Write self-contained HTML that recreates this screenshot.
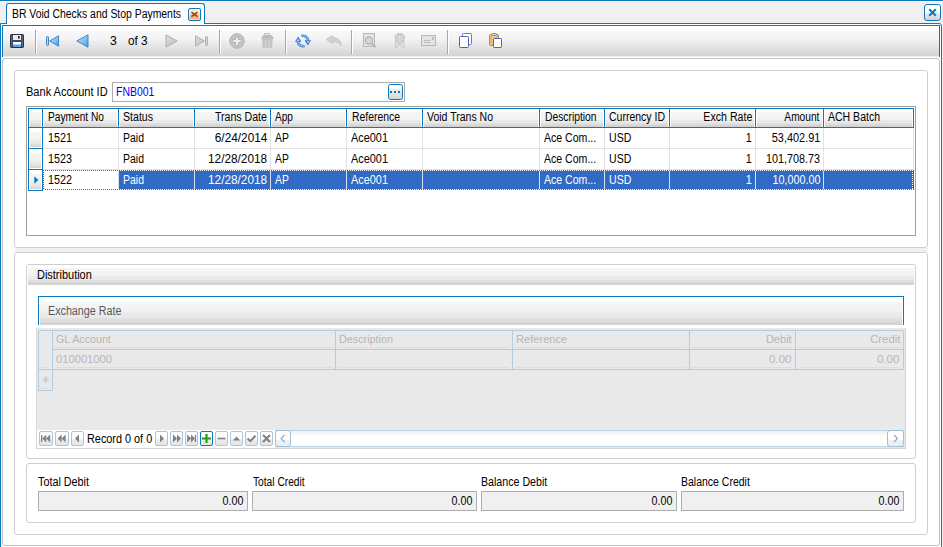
<!DOCTYPE html>
<html lang="en"><head><meta charset="utf-8"><title>BR Void Checks and Stop Payments</title>
<style>
html,body{margin:0;padding:0;}
body{background:#f0f0f0;width:943px;height:547px;overflow:hidden;font-family:"Liberation Sans", sans-serif;font-size:12px;}
#app{position:relative;width:943px;height:547px;overflow:hidden;}
#app div,#app svg,#app span{position:absolute;box-sizing:border-box;}
.t{white-space:pre;line-height:16px;height:16px;transform-origin:0 0;}

</style></head>
<body>
<div id="app">
<div style="left:0px;top:0px;width:943px;height:1px;background:#0b78c0;"></div>
<div style="left:0px;top:1px;width:943px;height:1px;background:#fff;"></div>
<div style="left:0px;top:23px;width:942px;height:530px;border:1px solid #0b78c0;background:#fff;border-radius:0 3px 0 0;"></div>
<div style="left:2px;top:25px;width:938px;height:32px;border:1px solid #0b78c0;border-bottom:none;background:linear-gradient(#fff 0,#fff 4.5px,#f7f7f7 5.5px,#f3f3f3 14px,#ededed 15px,#ebebeb 18px,#e6e6e6 19px,#e3e3e3 23px,#dddddd 24px,#dadada 27px,#d5d5d5 28px,#d5d5d5 30px,#ececec 30px,#ececec 31px);"></div>
<div style="left:6px;top:3px;width:199px;height:21px;border:1px solid #0b78c0;border-bottom:none;border-radius:3px 3px 0 0;background:#fff;"></div>
<div style="left:188px;top:8px;width:13px;height:13px;border:1px solid #0b78c0;border-radius:2px;background:linear-gradient(#fef1e6 0,#fddcc2 45%,#fabb8c 55%,#f9ac76 100%);box-shadow:inset 0 0 0 1px rgba(255,255,255,0.45);"><svg width="11" height="11" viewBox="0 0 11 11" style="left:0;top:0"><path d="M2.5 3.1L8.5 7.7M8.5 3.1L2.5 7.7" stroke="#9a4300" stroke-width="1.55"/></svg></div>
<div style="left:924px;top:4px;width:17px;height:17px;border:1px solid #0b78c0;border-radius:3px;background:linear-gradient(#fff 0,#fff 45%,#e9e9e9 60%,#d2d2d2 100%);"><svg width="15" height="15" viewBox="0 0 15 15" style="left:0;top:0"><path d="M4.2 4.2L10.8 10.8M10.8 4.2L4.2 10.8" stroke="#0b78c0" stroke-width="2"/></svg></div>
<div style="left:35px;top:30px;width:1px;height:24px;background:#a8a8a8;"></div>
<div style="left:36px;top:30px;width:1px;height:24px;background:#fff;"></div>
<div style="left:219px;top:30px;width:1px;height:24px;background:#a8a8a8;"></div>
<div style="left:220px;top:30px;width:1px;height:24px;background:#fff;"></div>
<div style="left:285px;top:30px;width:1px;height:24px;background:#a8a8a8;"></div>
<div style="left:286px;top:30px;width:1px;height:24px;background:#fff;"></div>
<div style="left:351px;top:30px;width:1px;height:24px;background:#a8a8a8;"></div>
<div style="left:352px;top:30px;width:1px;height:24px;background:#fff;"></div>
<div style="left:447px;top:30px;width:1px;height:24px;background:#a8a8a8;"></div>
<div style="left:448px;top:30px;width:1px;height:24px;background:#fff;"></div>
<svg style="left:10px;top:34px" width="14" height="14" viewBox="0 0 14 14"><rect x="0.5" y="0.5" width="13" height="13" rx="0.8" fill="#3d4862" stroke="#2b3144"/><path d="M1.5 1.5V12.5M12.5 1.5V12.5" stroke="#6a7388" stroke-width="0.8"/><rect x="3" y="1" width="8" height="5" fill="#e9edf1"/><rect x="8" y="2" width="1.6" height="2.6" fill="#1c1c24"/><rect x="3" y="8" width="8" height="5" fill="#fff"/><rect x="3" y="10.6" width="8" height="2.4" fill="#5b9bd8"/><rect x="3" y="10.6" width="8" height="0.8" fill="#8fc0ec"/></svg>
<svg style="left:46px;top:35px" width="13" height="12" viewBox="0 0 13 12"><defs><linearGradient id="gb" x1="0" y1="0" x2="1" y2="1"><stop offset="0" stop-color="#c4e4fa"/><stop offset="0.5" stop-color="#8cc4f2"/><stop offset="1" stop-color="#4d98e0"/></linearGradient></defs><rect x="0.5" y="1.5" width="2" height="9" rx="0.8" fill="#b4daf8" stroke="#3d86cc"/><path d="M12.5 0.8V11.2L3.6 6Z" fill="url(#gb)" stroke="#3d86cc"/></svg>
<svg style="left:76px;top:34px" width="13" height="14" viewBox="0 0 13 14"><path d="M12 0.8V13.2L0.8 7Z" fill="url(#gb)" stroke="#3d86cc"/></svg>
<svg style="left:165px;top:34px" width="13" height="14" viewBox="0 0 13 14"><defs><linearGradient id="gg" x1="0" y1="0" x2="1" y2="1"><stop offset="0" stop-color="#dedede"/><stop offset="1" stop-color="#bebebe"/></linearGradient></defs><path d="M1 0.8V13.2L12.2 7Z" fill="url(#gg)" stroke="#b0b0b0"/></svg>
<svg style="left:195px;top:35px" width="14" height="12" viewBox="0 0 14 12"><path d="M0.5 0.8V11.2L9.4 6Z" fill="url(#gg)" stroke="#b0b0b0"/><rect x="10.5" y="1.5" width="2" height="9" rx="0.8" fill="#d6d6d6" stroke="#b0b0b0"/></svg>
<svg style="left:229px;top:33px" width="16" height="16" viewBox="0 0 16 16"><circle cx="8" cy="8" r="7.3" fill="#c4c4c4" stroke="#b4b4b4"/><path d="M8 3.6V12.4M3.6 8H12.4" stroke="#b0b0b0" stroke-width="3.6"/><path d="M8 4.3V11.7M4.3 8H11.7" stroke="#ededed" stroke-width="2.2"/></svg>
<svg style="left:261px;top:33px" width="13" height="15" viewBox="0 0 13 15"><rect x="3.5" y="0.5" width="5" height="2" rx="0.6" fill="none" stroke="#b4b4b4"/><path d="M0.4 5.6L2 2.4H10.6L12.4 5.6Z" fill="#bdbdbd" stroke="#b6b6b6" stroke-width="0.6"/><path d="M1.5 6H11.3L10.9 14.6H1.9Z" fill="#c6c6c6" stroke="#bcbcbc" stroke-width="0.6"/><path d="M4.6 7V14M8.2 7V14" stroke="#d6d6d6" stroke-width="1.1"/></svg>
<svg style="left:295px;top:34px" width="16" height="14" viewBox="0 0 16 14"><g fill="none" stroke-linecap="butt"><path d="M6.4 2A5.3 5.3 0 0 1 13.2 6.2" stroke="#3274cc" stroke-width="2.6"/><path d="M9.6 12A5.3 5.3 0 0 1 2.8 7.8" stroke="#3274cc" stroke-width="2.6"/><path d="M6.6 2A5.3 5.3 0 0 1 13.2 6.2" stroke="#9ad2f6" stroke-width="1.1"/><path d="M9.4 12A5.3 5.3 0 0 1 2.8 7.8" stroke="#9ad2f6" stroke-width="1.1"/></g><path d="M9.6 6.2H16L12.8 11.6Z" fill="#3274cc"/><path d="M11.5 7.1H14.3L12.9 9.6Z" fill="#a8def8"/><path d="M0 7.8H6.4L3.2 2.4Z" fill="#3274cc"/><path d="M1.7 6.9H4.5L3.1 4.4Z" fill="#a8def8"/></svg>
<svg style="left:326px;top:35px" width="16" height="11" viewBox="0 0 16 11"><path d="M0.4 4.4L6.4 0.5V2.6C11 2.6 15 5 15.3 10.6C13.6 8 10.5 6.6 6.4 6.8V8.6Z" fill="#d0d0d0" stroke="#c2c2c2" stroke-width="0.8"/></svg>
<svg style="left:363px;top:33px" width="14" height="15" viewBox="0 0 14 15"><rect x="0.5" y="0.5" width="11" height="13" fill="#e6e6e6" stroke="#b6b6b6"/><circle cx="6" cy="7.5" r="3.6" fill="#d6d6d6" stroke="#b0b0b0" stroke-width="1.2"/><path d="M8.8 10.5L12.6 14.3" stroke="#b4b4b4" stroke-width="2"/></svg>
<svg style="left:394px;top:33px" width="12" height="16" viewBox="0 0 12 16"><path d="M1.6 7L1.2 15.2L5.7 12L10.2 15.2L9.8 7Z" fill="#e0e0e0" stroke="#c0c0c0" stroke-width="0.8"/><path d="M5.7 0.4C8.6 0.4 10.4 2.3 10.4 4.6C10.4 7 7.6 9 5.7 11.2C3.8 9 1 7 1 4.6C1 2.3 2.8 0.4 5.7 0.4Z" fill="#d6d6d6" stroke="#bababa" stroke-width="0.9"/><circle cx="5.7" cy="4.4" r="1.5" fill="#f6f6f6" stroke="#b8b8b8" stroke-width="0.7"/></svg>
<svg style="left:421px;top:35px" width="15" height="11" viewBox="0 0 15 11"><rect x="0.5" y="0.5" width="14" height="10" fill="#e4e4e4" stroke="#b8b8b8"/><rect x="11" y="2" width="2" height="3" fill="#c0c0c0"/><path d="M3 5.5h6.4M3 7.5h6.4" stroke="#bcbcbc"/></svg>
<svg style="left:459px;top:33px" width="13" height="15" viewBox="0 0 13 15"><rect x="3.5" y="0.5" width="9" height="11" rx="0.8" fill="#fff" stroke="#6878c4"/><rect x="0.5" y="3.5" width="9" height="11" rx="0.8" fill="#fff" stroke="#5264ba"/></svg>
<svg style="left:489px;top:33px" width="14" height="15" viewBox="0 0 14 15"><defs><linearGradient id="go" x1="0" y1="0" x2="1" y2="0"><stop offset="0" stop-color="#e9a646"/><stop offset="0.45" stop-color="#f6d292"/><stop offset="1" stop-color="#e9a646"/></linearGradient></defs><rect x="0.5" y="1.5" width="9" height="11" rx="1" fill="url(#go)" stroke="#cc8c34"/><rect x="2.5" y="0.5" width="5" height="2" rx="1" fill="#cdd8ee" stroke="#6c84c0"/><rect x="4.5" y="5.5" width="8" height="9" rx="0.6" fill="#fff" stroke="#5264ba"/></svg>
<div style="left:2px;top:58px;width:938px;height:488px;border:1px solid #c4c4c4;border-radius:3px;background:#fff;"></div>
<div style="left:14px;top:70px;width:914px;height:178px;border:1px solid #cfcfcf;border-radius:3px;background:#fff;"></div>
<div style="left:15px;top:248px;width:913px;height:4px;background:#f0f0f0;"></div>
<div style="left:14px;top:252px;width:914px;height:283px;border:1px solid #cfcfcf;border-radius:3px;background:#fff;"></div>
<div style="left:112px;top:82px;width:293px;height:20px;border:1px solid #ababab;background:#fff;"></div>
<div style="left:388px;top:84px;width:15px;height:16px;border:1px solid #0b78c0;border-radius:2.5px;background:linear-gradient(#fff 0,#fff 22%,#ededed 32%,#d6d6d6 100%);"></div>
<div style="left:390px;top:91px;width:2px;height:2px;background:#0b78c0;"></div>
<div style="left:394px;top:91px;width:2px;height:2px;background:#0b78c0;"></div>
<div style="left:398px;top:91px;width:2px;height:2px;background:#0b78c0;"></div>
<div style="left:26px;top:106px;width:890px;height:130px;border:1px solid #a0a0a0;background:#fff;"></div>
<div style="left:28px;top:108px;width:886px;height:20px;background:linear-gradient(#fff 0,#fff 17%,#f5f5f5 19%,#f2f2f2 60%,#eaeaea 63%,#e8e8e8 77%,#dfdfdf 80%,#dddddd 88%,#d4d4d4 91%,#d1d1d1 100%);border-top:1px solid #0b78c0;border-bottom:1px solid #0b78c0;"></div>
<div style="left:28px;top:108px;width:1px;height:20px;background:#0b78c0;"></div>
<div style="left:29px;top:109px;width:1px;height:18px;background:#fff;"></div>
<div style="left:42px;top:108px;width:1px;height:20px;background:#0b78c0;"></div>
<div style="left:43px;top:109px;width:1px;height:18px;background:#fff;"></div>
<div style="left:41px;top:109px;width:1px;height:18px;background:#fff;"></div>
<div style="left:118px;top:108px;width:1px;height:20px;background:#0b78c0;"></div>
<div style="left:119px;top:109px;width:1px;height:18px;background:#fff;"></div>
<div style="left:117px;top:109px;width:1px;height:18px;background:#fff;"></div>
<div style="left:194px;top:108px;width:1px;height:20px;background:#0b78c0;"></div>
<div style="left:195px;top:109px;width:1px;height:18px;background:#fff;"></div>
<div style="left:193px;top:109px;width:1px;height:18px;background:#fff;"></div>
<div style="left:270px;top:108px;width:1px;height:20px;background:#0b78c0;"></div>
<div style="left:271px;top:109px;width:1px;height:18px;background:#fff;"></div>
<div style="left:269px;top:109px;width:1px;height:18px;background:#fff;"></div>
<div style="left:346px;top:108px;width:1px;height:20px;background:#0b78c0;"></div>
<div style="left:347px;top:109px;width:1px;height:18px;background:#fff;"></div>
<div style="left:345px;top:109px;width:1px;height:18px;background:#fff;"></div>
<div style="left:422px;top:108px;width:1px;height:20px;background:#0b78c0;"></div>
<div style="left:423px;top:109px;width:1px;height:18px;background:#fff;"></div>
<div style="left:421px;top:109px;width:1px;height:18px;background:#fff;"></div>
<div style="left:539px;top:108px;width:1px;height:20px;background:#0b78c0;"></div>
<div style="left:540px;top:109px;width:1px;height:18px;background:#fff;"></div>
<div style="left:538px;top:109px;width:1px;height:18px;background:#fff;"></div>
<div style="left:604px;top:108px;width:1px;height:20px;background:#0b78c0;"></div>
<div style="left:605px;top:109px;width:1px;height:18px;background:#fff;"></div>
<div style="left:603px;top:109px;width:1px;height:18px;background:#fff;"></div>
<div style="left:669px;top:108px;width:1px;height:20px;background:#0b78c0;"></div>
<div style="left:670px;top:109px;width:1px;height:18px;background:#fff;"></div>
<div style="left:668px;top:109px;width:1px;height:18px;background:#fff;"></div>
<div style="left:755px;top:108px;width:1px;height:20px;background:#0b78c0;"></div>
<div style="left:756px;top:109px;width:1px;height:18px;background:#fff;"></div>
<div style="left:754px;top:109px;width:1px;height:18px;background:#fff;"></div>
<div style="left:823px;top:108px;width:1px;height:20px;background:#0b78c0;"></div>
<div style="left:824px;top:109px;width:1px;height:18px;background:#fff;"></div>
<div style="left:822px;top:109px;width:1px;height:18px;background:#fff;"></div>
<div style="left:913px;top:108px;width:1px;height:20px;background:#0b78c0;"></div>
<div style="left:912px;top:109px;width:1px;height:18px;background:#fff;"></div>
<div style="left:28px;top:127px;width:15px;height:22px;border:1px solid #0b78c0;background:linear-gradient(#fff 0,#fff 17%,#f5f5f5 19%,#f2f2f2 60%,#eaeaea 63%,#e8e8e8 77%,#dfdfdf 80%,#dddddd 88%,#d4d4d4 91%,#d1d1d1 100%);box-shadow:inset 0 0 0 1px #fff;"></div>
<div style="left:43px;top:148px;width:871px;height:1px;background:#e2e2e2;"></div>
<div style="left:118px;top:128px;width:1px;height:21px;background:#e2e2e2;"></div>
<div style="left:194px;top:128px;width:1px;height:21px;background:#e2e2e2;"></div>
<div style="left:270px;top:128px;width:1px;height:21px;background:#e2e2e2;"></div>
<div style="left:346px;top:128px;width:1px;height:21px;background:#e2e2e2;"></div>
<div style="left:422px;top:128px;width:1px;height:21px;background:#e2e2e2;"></div>
<div style="left:539px;top:128px;width:1px;height:21px;background:#e2e2e2;"></div>
<div style="left:604px;top:128px;width:1px;height:21px;background:#e2e2e2;"></div>
<div style="left:669px;top:128px;width:1px;height:21px;background:#e2e2e2;"></div>
<div style="left:755px;top:128px;width:1px;height:21px;background:#e2e2e2;"></div>
<div style="left:823px;top:128px;width:1px;height:21px;background:#e2e2e2;"></div>
<div style="left:913px;top:128px;width:1px;height:21px;background:#e2e2e2;"></div>
<div style="left:28px;top:148px;width:15px;height:22px;border:1px solid #0b78c0;background:linear-gradient(#fff 0,#fff 17%,#f5f5f5 19%,#f2f2f2 60%,#eaeaea 63%,#e8e8e8 77%,#dfdfdf 80%,#dddddd 88%,#d4d4d4 91%,#d1d1d1 100%);box-shadow:inset 0 0 0 1px #fff;"></div>
<div style="left:43px;top:169px;width:871px;height:1px;background:#e2e2e2;"></div>
<div style="left:118px;top:149px;width:1px;height:21px;background:#e2e2e2;"></div>
<div style="left:194px;top:149px;width:1px;height:21px;background:#e2e2e2;"></div>
<div style="left:270px;top:149px;width:1px;height:21px;background:#e2e2e2;"></div>
<div style="left:346px;top:149px;width:1px;height:21px;background:#e2e2e2;"></div>
<div style="left:422px;top:149px;width:1px;height:21px;background:#e2e2e2;"></div>
<div style="left:539px;top:149px;width:1px;height:21px;background:#e2e2e2;"></div>
<div style="left:604px;top:149px;width:1px;height:21px;background:#e2e2e2;"></div>
<div style="left:669px;top:149px;width:1px;height:21px;background:#e2e2e2;"></div>
<div style="left:755px;top:149px;width:1px;height:21px;background:#e2e2e2;"></div>
<div style="left:823px;top:149px;width:1px;height:21px;background:#e2e2e2;"></div>
<div style="left:913px;top:149px;width:1px;height:21px;background:#e2e2e2;"></div>
<div style="left:28px;top:169px;width:15px;height:22px;border:1px solid #0b78c0;background:linear-gradient(#fff 0,#fff 17%,#f5f5f5 19%,#f2f2f2 60%,#eaeaea 63%,#e8e8e8 77%,#dfdfdf 80%,#dddddd 88%,#d4d4d4 91%,#d1d1d1 100%);box-shadow:inset 0 0 0 1px #fff;"></div>
<div style="left:43px;top:170px;width:871px;height:20px;background:#316ac5;"></div>
<div style="left:43px;top:170px;width:75px;height:20px;background:#fff;"></div>
<div style="left:118px;top:170px;width:1px;height:20px;background:#d8e0f0;"></div>
<div style="left:194px;top:170px;width:1px;height:20px;background:#d8e0f0;"></div>
<div style="left:270px;top:170px;width:1px;height:20px;background:#d8e0f0;"></div>
<div style="left:346px;top:170px;width:1px;height:20px;background:#d8e0f0;"></div>
<div style="left:422px;top:170px;width:1px;height:20px;background:#d8e0f0;"></div>
<div style="left:539px;top:170px;width:1px;height:20px;background:#d8e0f0;"></div>
<div style="left:604px;top:170px;width:1px;height:20px;background:#d8e0f0;"></div>
<div style="left:669px;top:170px;width:1px;height:20px;background:#d8e0f0;"></div>
<div style="left:755px;top:170px;width:1px;height:20px;background:#d8e0f0;"></div>
<div style="left:823px;top:170px;width:1px;height:20px;background:#d8e0f0;"></div>
<div style="left:913px;top:170px;width:1px;height:20px;background:#d8e0f0;"></div>
<div style="left:43px;top:170px;width:870px;height:1px;background:repeating-linear-gradient(90deg,#316ac5 0 1px,#fff 1px 2px);"></div>
<div style="left:43px;top:189px;width:870px;height:1px;background:repeating-linear-gradient(90deg,#316ac5 0 1px,#fff 1px 2px);"></div>
<div style="left:43px;top:170px;width:1px;height:20px;background:repeating-linear-gradient(#316ac5 0 1px,#fff 1px 2px);"></div>
<div style="left:912px;top:171px;width:1px;height:18px;background:repeating-linear-gradient(#316ac5 0 1px,#fff 1px 2px);"></div>
<div style="left:913px;top:170px;width:1px;height:20px;background:#316ac5;"></div>
<svg style="left:34px;top:176px" width="5" height="8" viewBox="0 0 5 8"><path d="M0.3 0.2L4.4 4L0.3 7.8Z" fill="#0b78c0"/></svg>
<div style="left:26px;top:264px;width:890px;height:195px;border:1px solid #cfcfcf;border-radius:3px;background:#fff;"></div>
<div style="left:27px;top:265px;width:888px;height:20px;background:#fff;border-radius:2px 2px 0 0;"></div>
<div style="left:28px;top:265px;width:886px;height:20px;background:linear-gradient(#fff 0,#fff 3px,#f5f5f5 3.5px,#f2f2f2 11px,#ebebeb 11.5px,#e8e8e8 15px,#e1e1e1 15.5px,#dedede 17px,#d6d6d6 17.5px,#d3d3d3 20px);"></div>
<div style="left:38px;top:296px;width:866px;height:29px;border:1px solid #0b78c0;border-bottom:none;background:#fff;"></div>
<div style="left:40px;top:297px;width:862px;height:28px;background:linear-gradient(#fff 0,#fff 5px,#f5f5f5 5.5px,#f2f2f2 15px,#ebebeb 15.5px,#e8e8e8 21px,#e0e0e0 21.5px,#dddddd 24.5px,#d5d5d5 25px,#d2d2d2 28px);"></div>
<div style="left:36px;top:328px;width:870px;height:121px;background:#e9e9e9;"></div>
<div style="left:38px;top:330px;width:866px;height:40px;border:1px solid #b2cde1;border-radius:2px 0 0 0;"></div>
<div style="left:52px;top:349px;width:852px;height:1px;background:#b2cde1;"></div>
<div style="left:52px;top:330px;width:1px;height:40px;background:#b2cde1;"></div>
<div style="left:335px;top:330px;width:1px;height:40px;background:#b2cde1;"></div>
<div style="left:512px;top:330px;width:1px;height:40px;background:#b2cde1;"></div>
<div style="left:689px;top:330px;width:1px;height:40px;background:#b2cde1;"></div>
<div style="left:795px;top:330px;width:1px;height:40px;background:#b2cde1;"></div>
<div style="left:38px;top:369px;width:15px;height:22px;border:1px solid #b2cde1;"></div>
<div style="left:55px;top:347px;width:277px;height:1px;background:#dedede;"></div>
<div style="left:55px;top:367px;width:277px;height:1px;background:#dedede;"></div>
<div style="left:338px;top:347px;width:171px;height:1px;background:#dedede;"></div>
<div style="left:338px;top:367px;width:171px;height:1px;background:#dedede;"></div>
<div style="left:515px;top:347px;width:171px;height:1px;background:#dedede;"></div>
<div style="left:515px;top:367px;width:171px;height:1px;background:#dedede;"></div>
<div style="left:692px;top:347px;width:100px;height:1px;background:#dedede;"></div>
<div style="left:692px;top:367px;width:100px;height:1px;background:#dedede;"></div>
<div style="left:798px;top:347px;width:102px;height:1px;background:#dedede;"></div>
<div style="left:798px;top:367px;width:102px;height:1px;background:#dedede;"></div>
<div style="left:41px;top:367px;width:8px;height:1px;background:#dedede;"></div>
<div style="left:41px;top:388px;width:8px;height:1px;background:#dedede;"></div>
<svg style="left:42px;top:376px" width="8" height="8" viewBox="0 0 8 8"><path d="M3.6 0.2V7.2M0.1 3.7H7.1M1.3 1.4L5.9 6M5.9 1.4L1.3 6" stroke="#a9c9e2" stroke-width="0.8" fill="none"/></svg>
<div style="left:36px;top:328px;width:870px;height:121px;border:1px solid #d4d4d4;border-top:none;border-left-color:#d8d8d8;"></div>
<div style="left:37px;top:430px;width:867px;height:18px;background:#fff;"></div>
<div style="left:39px;top:431px;width:14px;height:15px;border:1px solid #a7c6dc;border-radius:2px;background:linear-gradient(#fff 0,#fdfdfd 50%,#ececec 60%,#e6e6e6 100%);"><svg width="14" height="15" viewBox="0 0 14 15" style="left:-1px;top:-1px"><rect x="2" y="4" width="1.3" height="7" fill="#808080"/><path d="M7.3 3.5V11.5L3.3 7.5Z" fill="#808080"/><path d="M11.2 3.5V11.5L7.2 7.5Z" fill="#808080"/></svg></div>
<div style="left:55px;top:431px;width:14px;height:15px;border:1px solid #a7c6dc;border-radius:2px;background:linear-gradient(#fff 0,#fdfdfd 50%,#ececec 60%,#e6e6e6 100%);"><svg width="14" height="15" viewBox="0 0 14 15" style="left:-1px;top:-1px"><path d="M6.6 3.5V11.5L2.6 7.5Z" fill="#808080"/><path d="M10.6 3.5V11.5L6.6 7.5Z" fill="#808080"/></svg></div>
<div style="left:71px;top:431px;width:13px;height:15px;border:1px solid #a7c6dc;border-radius:2px;background:linear-gradient(#fff 0,#fdfdfd 50%,#ececec 60%,#e6e6e6 100%);"><svg width="13" height="15" viewBox="0 0 13 15" style="left:-1px;top:-1px"><path d="M8 3.5V11.5L4 7.5Z" fill="#808080"/></svg></div>
<div style="left:155px;top:431px;width:13px;height:15px;border:1px solid #a7c6dc;border-radius:2px;background:linear-gradient(#fff 0,#fdfdfd 50%,#ececec 60%,#e6e6e6 100%);"><svg width="13" height="15" viewBox="0 0 13 15" style="left:-1px;top:-1px"><path d="M5 3.5V11.5L9 7.5Z" fill="#808080"/></svg></div>
<div style="left:170px;top:431px;width:13px;height:15px;border:1px solid #a7c6dc;border-radius:2px;background:linear-gradient(#fff 0,#fdfdfd 50%,#ececec 60%,#e6e6e6 100%);"><svg width="13" height="15" viewBox="0 0 13 15" style="left:-1px;top:-1px"><path d="M3 3.5V11.5L7 7.5Z" fill="#808080"/><path d="M7 3.5V11.5L11 7.5Z" fill="#808080"/></svg></div>
<div style="left:185px;top:431px;width:13px;height:15px;border:1px solid #a7c6dc;border-radius:2px;background:linear-gradient(#fff 0,#fdfdfd 50%,#ececec 60%,#e6e6e6 100%);"><svg width="13" height="15" viewBox="0 0 13 15" style="left:-1px;top:-1px"><path d="M2.2 3.5V11.5L6.2 7.5Z" fill="#808080"/><path d="M6 3.5V11.5L10 7.5Z" fill="#808080"/><rect x="9.8" y="4" width="1.3" height="7" fill="#808080"/></svg></div>
<div style="left:200px;top:431px;width:13px;height:15px;border:1px solid #0b78c0;border-radius:2px;background:linear-gradient(#fff 0,#fdfdfd 50%,#ececec 60%,#e6e6e6 100%);"><svg width="13" height="15" viewBox="0 0 13 15" style="left:-1px;top:-1px"><path d="M6.5 3V12M2 7.5H11" stroke="#2f9a10" stroke-width="2.2"/></svg></div>
<div style="left:215px;top:431px;width:13px;height:15px;border:1px solid #a7c6dc;border-radius:2px;background:linear-gradient(#fff 0,#fdfdfd 50%,#ececec 60%,#e6e6e6 100%);"><svg width="13" height="15" viewBox="0 0 13 15" style="left:-1px;top:-1px"><path d="M2.5 7.5H10.5" stroke="#808080" stroke-width="1.6"/></svg></div>
<div style="left:230px;top:431px;width:13px;height:15px;border:1px solid #a7c6dc;border-radius:2px;background:linear-gradient(#fff 0,#fdfdfd 50%,#ececec 60%,#e6e6e6 100%);"><svg width="13" height="15" viewBox="0 0 13 15" style="left:-1px;top:-1px"><path d="M2.8 9.5H10.2L6.5 5.5Z" fill="#808080"/></svg></div>
<div style="left:245px;top:431px;width:13px;height:15px;border:1px solid #a7c6dc;border-radius:2px;background:linear-gradient(#fff 0,#fdfdfd 50%,#ececec 60%,#e6e6e6 100%);"><svg width="13" height="15" viewBox="0 0 13 15" style="left:-1px;top:-1px"><path d="M2.5 7.5L5.3 10.2L10.5 4.8" fill="none" stroke="#808080" stroke-width="2"/></svg></div>
<div style="left:260px;top:431px;width:13px;height:15px;border:1px solid #a7c6dc;border-radius:2px;background:linear-gradient(#fff 0,#fdfdfd 50%,#ececec 60%,#e6e6e6 100%);"><svg width="13" height="15" viewBox="0 0 13 15" style="left:-1px;top:-1px"><path d="M3 4L10 11M10 4L3 11" stroke="#808080" stroke-width="2.1"/></svg></div>
<div style="left:275px;top:430px;width:629px;height:17px;border-top:1px solid #b9d3e6;border-bottom:1px solid #b9d3e6;background:linear-gradient(#f2f2f2 0,#f6f6f6 3px,#fff 5px);"></div>
<div style="left:275px;top:447px;width:630px;height:1px;background:#e9e9e9;"></div>
<div style="left:275px;top:430px;width:16px;height:17px;border:1px solid #9dc0d8;border-radius:3px;background:linear-gradient(#fff 0,#fff 55%,#f0f0f0 65%,#ededed 100%);"><svg width="14" height="15" viewBox="0 0 14 15" style="left:0;top:0"><path d="M8.5 4L5 7.5L8.5 11" fill="none" stroke="#78aedb" stroke-width="1.1"/></svg></div>
<div style="left:887px;top:430px;width:17px;height:17px;border:1px solid #9dc0d8;border-radius:3px;background:linear-gradient(#fff 0,#fff 55%,#f0f0f0 65%,#ededed 100%);"><svg width="15" height="15" viewBox="0 0 15 15" style="left:0;top:0"><path d="M6 4L9.5 7.5L6 11" fill="none" stroke="#78aedb" stroke-width="1.1"/></svg></div>
<div style="left:26px;top:463px;width:890px;height:60px;border:1px solid #cfcfcf;border-radius:3px;background:#fff;"></div>
<div style="left:38px;top:491px;width:210px;height:20px;border:1px solid #adadad;background:#f0f0f0;"></div>
<div style="left:252px;top:491px;width:225px;height:20px;border:1px solid #adadad;background:#f0f0f0;"></div>
<div style="left:481px;top:491px;width:196px;height:20px;border:1px solid #adadad;background:#f0f0f0;"></div>
<div style="left:681px;top:491px;width:223px;height:20px;border:1px solid #adadad;background:#f0f0f0;"></div>
<span class="t" style="top:5.84px;color:#000;left:11.50px;transform:scaleX(0.8676);">BR Void Checks and Stop Payments</span>
<span class="t" style="top:32.84px;color:#000;left:110.40px;transform:scaleX(1.0168);">3</span>
<span class="t" style="top:32.84px;color:#000;left:127.90px;transform:scaleX(0.9792);">of 3</span>
<span class="t" style="top:83.84px;color:#000;left:25.70px;transform:scaleX(0.9198);">Bank Account ID</span>
<span class="t" style="top:83.84px;color:#0000ff;left:116.00px;transform:scaleX(0.8698);">FNB001</span>
<span class="t" style="top:108.84px;color:#000;left:47.50px;transform:scaleX(0.8481);">Payment No</span>
<span class="t" style="top:108.84px;color:#000;left:123.00px;transform:scaleX(0.8815);">Status</span>
<span class="t" style="top:108.84px;color:#000;right:676.20px;transform:scaleX(0.8825);transform-origin:100% 0;">Trans Date</span>
<span class="t" style="top:108.84px;color:#000;left:275.10px;transform:scaleX(0.8427);">App</span>
<span class="t" style="top:108.84px;color:#000;left:351.90px;transform:scaleX(0.8668);">Reference</span>
<span class="t" style="top:108.84px;color:#000;left:427.20px;transform:scaleX(0.8756);">Void Trans No</span>
<span class="t" style="top:108.84px;color:#000;left:544.50px;transform:scaleX(0.8596);">Description</span>
<span class="t" style="top:108.84px;color:#000;left:608.90px;transform:scaleX(0.8748);">Currency ID</span>
<span class="t" style="top:108.84px;color:#000;right:191.10px;transform:scaleX(0.8851);transform-origin:100% 0;">Exch Rate</span>
<span class="t" style="top:108.84px;color:#000;right:123.50px;transform:scaleX(0.8462);transform-origin:100% 0;">Amount</span>
<span class="t" style="top:108.84px;color:#000;left:827.50px;transform:scaleX(0.876);">ACH Batch</span>
<span class="t" style="top:129.84px;color:#000;left:47.50px;transform:scaleX(0.8988);">1521</span>
<span class="t" style="top:129.84px;color:#000;left:123.00px;transform:scaleX(0.8739);">Paid</span>
<span class="t" style="top:129.84px;color:#000;right:675.80px;transform:scaleX(0.9852);transform-origin:100% 0;">6/24/2014</span>
<span class="t" style="top:129.84px;color:#000;left:274.70px;transform:scaleX(0.8617);">AP</span>
<span class="t" style="top:129.84px;color:#000;left:350.60px;transform:scaleX(0.909);">Ace001</span>
<span class="t" style="top:129.84px;color:#000;left:543.80px;transform:scaleX(0.8794);">Ace Com...</span>
<span class="t" style="top:129.84px;color:#000;left:609.30px;transform:scaleX(0.8799);">USD</span>
<span class="t" style="top:129.84px;color:#000;right:191.80px;transform:scaleX(0.9);transform-origin:100% 0;">1</span>
<span class="t" style="top:129.84px;color:#000;right:122.80px;transform:scaleX(0.9103);transform-origin:100% 0;">53,402.91</span>
<span class="t" style="top:150.84px;color:#000;left:47.50px;transform:scaleX(0.8988);">1523</span>
<span class="t" style="top:150.84px;color:#000;left:123.00px;transform:scaleX(0.8739);">Paid</span>
<span class="t" style="top:150.84px;color:#000;right:675.80px;transform:scaleX(0.9823);transform-origin:100% 0;">12/28/2018</span>
<span class="t" style="top:150.84px;color:#000;left:274.70px;transform:scaleX(0.8617);">AP</span>
<span class="t" style="top:150.84px;color:#000;left:350.60px;transform:scaleX(0.909);">Ace001</span>
<span class="t" style="top:150.84px;color:#000;left:543.80px;transform:scaleX(0.8794);">Ace Com...</span>
<span class="t" style="top:150.84px;color:#000;left:609.30px;transform:scaleX(0.8799);">USD</span>
<span class="t" style="top:150.84px;color:#000;right:191.80px;transform:scaleX(0.9);transform-origin:100% 0;">1</span>
<span class="t" style="top:150.84px;color:#000;right:122.80px;transform:scaleX(0.8991);transform-origin:100% 0;">101,708.73</span>
<span class="t" style="top:171.84px;color:#000;left:47.50px;transform:scaleX(0.8988);">1522</span>
<span class="t" style="top:171.84px;color:#fff;left:123.00px;transform:scaleX(0.8739);">Paid</span>
<span class="t" style="top:171.84px;color:#fff;right:675.80px;transform:scaleX(0.9823);transform-origin:100% 0;">12/28/2018</span>
<span class="t" style="top:171.84px;color:#fff;left:274.70px;transform:scaleX(0.8617);">AP</span>
<span class="t" style="top:171.84px;color:#fff;left:350.60px;transform:scaleX(0.909);">Ace001</span>
<span class="t" style="top:171.84px;color:#fff;left:543.80px;transform:scaleX(0.8794);">Ace Com...</span>
<span class="t" style="top:171.84px;color:#fff;left:609.30px;transform:scaleX(0.8799);">USD</span>
<span class="t" style="top:171.84px;color:#fff;right:191.80px;transform:scaleX(0.9);transform-origin:100% 0;">1</span>
<span class="t" style="top:171.84px;color:#fff;right:122.80px;transform:scaleX(0.899);transform-origin:100% 0;">10,000.00</span>
<span class="t" style="top:266.84px;color:#000;left:36.90px;transform:scaleX(0.9129);">Distribution</span>
<span class="t" style="top:302.84px;color:#585858;left:48.10px;transform:scaleX(0.8944);">Exchange Rate</span>
<span class="t" style="top:331.19px;color:#b6b6b6;font-size:11px;left:56.00px;transform:scaleX(0.9704);">GL Account</span>
<span class="t" style="top:331.19px;color:#b6b6b6;font-size:11px;left:338.80px;transform:scaleX(0.9813);">Description</span>
<span class="t" style="top:331.19px;color:#b6b6b6;font-size:11px;left:515.80px;transform:scaleX(1.0086);">Reference</span>
<span class="t" style="top:331.19px;color:#b6b6b6;font-size:11px;right:151.30px;transform:scaleX(1.0044);transform-origin:100% 0;">Debit</span>
<span class="t" style="top:331.19px;color:#b6b6b6;font-size:11px;right:42.50px;transform:scaleX(1.0292);transform-origin:100% 0;">Credit</span>
<span class="t" style="top:351.19px;color:#b6b6b6;font-size:11px;left:55.80px;transform:scaleX(1.017);">010001000</span>
<span class="t" style="top:351.19px;color:#b6b6b6;font-size:11px;right:151.30px;transform:scaleX(1.041);transform-origin:100% 0;">0.00</span>
<span class="t" style="top:351.19px;color:#b6b6b6;font-size:11px;right:43.10px;transform:scaleX(1.0503);transform-origin:100% 0;">0.00</span>
<span class="t" style="top:430.84px;color:#000;left:86.50px;transform:scaleX(0.905);">Record 0 of 0</span>
<span class="t" style="top:473.84px;color:#000;left:38.20px;transform:scaleX(0.8994);">Total Debit</span>
<span class="t" style="top:492.84px;color:#000;right:699.30px;transform:scaleX(0.8904);transform-origin:100% 0;">0.00</span>
<span class="t" style="top:473.84px;color:#000;left:253.00px;transform:scaleX(0.85);">Total Credit</span>
<span class="t" style="top:492.84px;color:#000;right:470.30px;transform:scaleX(0.8904);transform-origin:100% 0;">0.00</span>
<span class="t" style="top:473.84px;color:#000;left:481.30px;transform:scaleX(0.886);">Balance Debit</span>
<span class="t" style="top:492.84px;color:#000;right:270.30px;transform:scaleX(0.8904);transform-origin:100% 0;">0.00</span>
<span class="t" style="top:473.84px;color:#000;left:681.10px;transform:scaleX(0.874);">Balance Credit</span>
<span class="t" style="top:492.84px;color:#000;right:43.30px;transform:scaleX(0.8904);transform-origin:100% 0;">0.00</span>
</div>
</body></html>
